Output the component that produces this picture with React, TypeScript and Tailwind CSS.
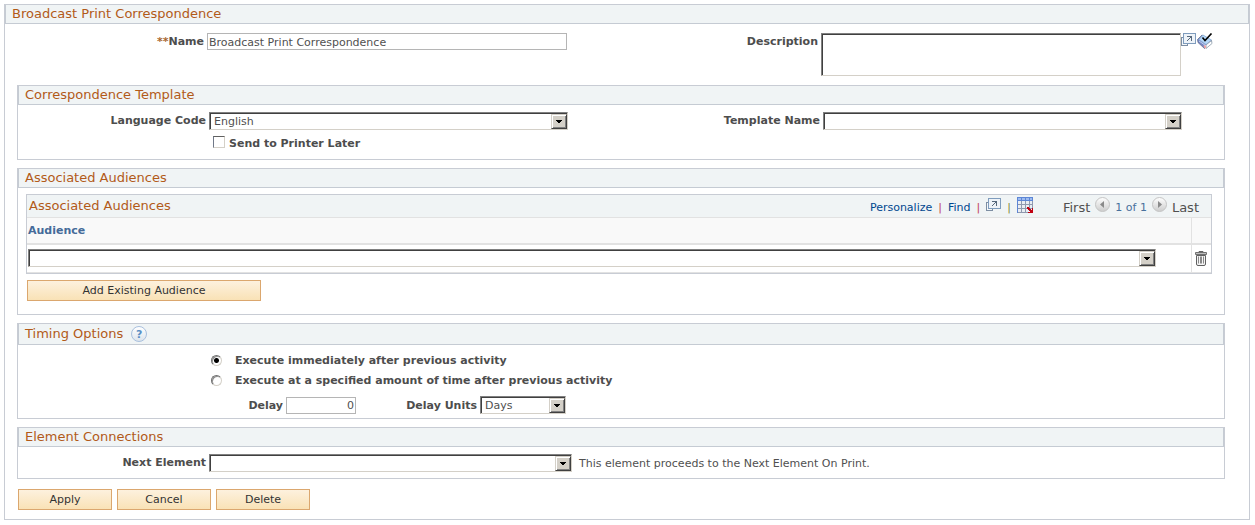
import { useState } from 'react';
import type { ReactNode } from 'react';

interface SectionProps {
  title: string;
  extra?: ReactNode;
  className?: string;
  children: ReactNode;
}

function Section({ title, extra, className = '', children }: SectionProps) {
  return (
    <section className="mb-2 border border-[#c8ccd4]">
      <div className="flex items-center gap-2 border-x border-b border-[#c5cbd3] bg-[#f0f4f5] pl-1.5">
        <h2 className="text-[13px] leading-[18px] text-[#b25a19]">{title}</h2>
        {extra}
      </div>
      <div className={className}>{children}</div>
    </section>
  );
}

interface SelectProps {
  id: string;
  options: string[];
  className: string;
  label?: string;
}

function Select({ id, options, className, label }: SelectProps) {
  return (
    <div className={`relative h-[18px] ${className}`}>
      <select
        id={id}
        aria-label={label}
        className="block h-full w-full appearance-none rounded-none border border-t-[#808080] border-r-[#d4d0c8] border-b-[#d4d0c8] border-l-[#808080] bg-white pt-px pr-5 pl-1 text-[11px] leading-[15px] text-[#505050] shadow-[inset_1px_1px_0_#404040] outline-none"
      >
        {options.map((option) => (
          <option key={option}>{option}</option>
        ))}
      </select>
      {/* Drop-down arrow */}
      <span className="pointer-events-none absolute top-[2px] right-[1px] flex h-[15px] w-[16px] items-center justify-center border border-t-[#d4d0c8] border-r-[#404040] border-b-[#404040] border-l-[#d4d0c8] bg-[#d4d0c8] shadow-[inset_1px_1px_0_#ffffff,inset_-1px_-1px_0_#808080]">
        <svg width="6" height="3" viewBox="0 0 6 3" shapeRendering="crispEdges">
          <path d="M0 0h6v1H0zM1 1h4v1H1zM2 2h2v1H2z" fill="#000" />
        </svg>
      </span>
    </div>
  );
}

function ActionButton({ className, children }: { className: string; children: ReactNode }) {
  return (
    <button
      type="button"
      className={`h-[21px] border border-[#dba76e] bg-linear-to-b from-[#fdf1de] to-[#f9e2b6] text-[11px] leading-[19px] text-[#333333] ${className}`}
    >
      {children}
    </button>
  );
}

function PopupIcon() {
  return (
    <svg width="15" height="13" viewBox="0 0 15 13" shapeRendering="crispEdges">
      <path d="M3.5 4.5h-3v8h6v-2" fill="#f4f7f9" stroke="#7d8ea3" />
      <rect x="2.5" y="0.5" width="12" height="10" fill="#eef3f8" stroke="#7f9cbd" />
      <path d="M6 3h5v1H6zM10 4h1v4h-1zM9 4h1v1H9zM8 5h1v1H8zM7 6h1v1H7zM6 7h1v1H6z" fill="#56687c" />
    </svg>
  );
}

function SpellCheckIcon() {
  return (
    <svg width="16" height="16" viewBox="0 0 16 16">
      <path d="M0.5 6.5 5 2l10 6-5.5 5.5-2 2L1 9.5z" fill="#7486c4" stroke="#68718f" strokeWidth="0.8" />
      <path d="M2 6.5 6 2 14.5 7 9 11.5z" fill="#b4d8f8" stroke="#8fb0d8" strokeWidth="0.8" />
      <path d="M9 12l5.5-4.5.5 3-6 5z" fill="#ffffff" stroke="#8a9aa8" strokeWidth="0.8" />
      <path d="M6.5 12.5 9 12v3.5l-2-1z" fill="#f2a5a5" />
      <path d="M2 8l6.5 4.5" stroke="#d6e6fa" strokeWidth="0.8" />
      <path d="M5.5 4.5 8 7.5l6.5-7" fill="none" stroke="#000" strokeWidth="1.6" />
    </svg>
  );
}

function GridIcon() {
  return (
    <svg width="16" height="16" viewBox="0 0 16 16" shapeRendering="crispEdges">
      <rect width="16" height="16" fill="#8f99ae" />
      <path d="M0 0h16v4H0zM0 0h1v16H0z" fill="#5d86d6" />
      <path d="M1 1h3v2H1zM5 1h3v2H5zM9 1h3v2H9zM13 1h2v2h-2z" fill="#9dbbf0" />
      <path d="M1 4h3v3H1zM5 4h3v3H5zM9 4h3v3H9zM13 4h2v3h-2zM1 8h3v3H1zM5 8h3v3H5zM9 8h3v3H9zM13 8h2v3h-2zM1 12h3v3H1zM5 12h3v3H5zM9 12h3v3H9z" fill="#e9edf3" />
      <path d="M12 12h4v4h-4z" fill="#f0f4f5" />
      <path d="M10 10h2v1h1v1h1v1h1v-2h1v5h-5v-1h2v-1h-1v-1h-1v-1h-1z" fill="#c00010" />
    </svg>
  );
}

function PagerIcon({ direction }: { direction: 'left' | 'right' }) {
  return (
    <svg width="15" height="15" viewBox="0 0 15 15">
      <defs>
        <linearGradient id={`pager-${direction}`} x1="0" y1="0" x2="0" y2="1">
          <stop offset="0" stopColor="#ffffff" />
          <stop offset="1" stopColor="#cccccc" />
        </linearGradient>
      </defs>
      <circle cx="7.5" cy="7.5" r="7" fill={`url(#pager-${direction})`} stroke="#c4c4c4" />
      <path d={direction === 'left' ? 'M9 4v7L5 7.5z' : 'M6 4v7l4-3.5z'} fill="#8a8a8a" />
    </svg>
  );
}

function TrashIcon() {
  return (
    <svg width="12" height="15" viewBox="0 0 12 15">
      <path d="M4 1.5V.5h4v1" fill="none" stroke="#606060" />
      <path d="M.5 1.5h11v2H.5z" fill="#bdbdbd" stroke="#707070" />
      <path d="M1.5 4.5h9v8.5q0 1.5-1.5 1.5H3q-1.5 0-1.5-1.5z" fill="#f4f4f4" stroke="#606060" />
      <path d="M3.5 5.5v7M5.5 5.5v7M6.5 5.5v7M8.5 5.5v7" stroke="#8a8a8a" />
    </svg>
  );
}

function HelpIcon() {
  return (
    <span className="my-[2px] flex size-4 items-center justify-center rounded-full border border-[#a9c0de] bg-linear-to-b from-white to-[#dde4ec] text-[11px] leading-none font-bold text-[#5b8fc4]">
      ?
    </span>
  );
}

const labelClass = 'pt-px text-right text-[11px] leading-[16px] font-bold text-[#4d4d4d]';
const inputClass = 'border border-[#b5b5b5] bg-white px-px pt-px text-[11px] leading-[14px] text-[#505050] outline-none';
const radioClass =
  'size-[11px] shrink-0 appearance-none rounded-full border border-t-[#707070] border-r-[#d4d0c8] border-b-[#d4d0c8] border-l-[#707070] bg-white shadow-[inset_1px_1px_0_#909090] checked:bg-[radial-gradient(circle,#000000_2px,#ffffff_3px)]';
const linkClass = 'pt-1 text-[#00478f]';

const timings = [
  { id: 'immediate', text: 'Execute immediately after previous activity' },
  { id: 'delayed', text: 'Execute at a specified amount of time after previous activity' },
];

export default function App() {
  const [name, setName] = useState('Broadcast Print Correspondence');
  const [timing, setTiming] = useState('immediate');
  const [delay, setDelay] = useState('0');

  return (
    <main className="bg-white pt-1 pr-[5px] pb-1 pl-1 font-['Verdana','DejaVu_Sans',sans-serif]">
      <form className="border border-[#c8ccd4]" onSubmit={(e) => e.preventDefault()}>
        <div className="border-x border-b border-[#c5cbd3] bg-[#f0f4f5] pl-1.5">
          <h1 className="text-[13px] leading-[18px] text-[#b25a19]">Broadcast Print Correspondence</h1>
        </div>

        {/* Name and description */}
        <div className="grid grid-cols-[199px_1fr_192px_428px] items-start gap-x-[3px] pt-[9px] pb-[9px]">
          <label htmlFor="name" className={labelClass}>
            <span className="text-[#a8672f]">**</span>Name
          </label>
          <input
            id="name"
            value={name}
            onChange={(e) => setName(e.target.value)}
            className={`h-[17px] w-[360px] ${inputClass}`}
          />
          <label htmlFor="description" className={labelClass}>
            Description
          </label>
          <div className="flex items-start">
            <textarea
              id="description"
              className="block h-[43px] w-[360px] resize-none border border-t-[#808080] border-r-[#d4d0c8] border-b-[#d4d0c8] border-l-[#808080] bg-white px-1 text-[11px] text-[#505050] shadow-[inset_1px_1px_0_#404040] outline-none"
            />
            <button type="button" aria-label="Open in new window">
              <PopupIcon />
            </button>
            <button type="button" aria-label="Spell check" className="ml-px">
              <SpellCheckIcon />
            </button>
          </div>
        </div>

        <div className="pr-6 pl-3">
          <Section title="Correspondence Template" className="pt-[7px] pb-[7px]">
            <div className="grid grid-cols-[188px_1fr_192px_401px] items-start gap-x-[3px]">
              <label htmlFor="language" className={labelClass}>
                Language Code
              </label>
              <Select id="language" options={['English']} className="w-[359px]" />
              <label htmlFor="template" className={labelClass}>
                Template Name
              </label>
              <Select id="template" options={['']} className="w-[359px]" />
            </div>
            <div className="mt-[5px] flex items-start gap-1 pl-[195px]">
              <input
                id="printer-later"
                type="checkbox"
                className="mt-px size-[12px] appearance-none border border-t-[#606060] border-r-[#d4d0c8] border-b-[#d4d0c8] border-l-[#707888] bg-white checked:bg-[#505050]"
              />
              <label htmlFor="printer-later" className={labelClass}>
                Send to Printer Later
              </label>
            </div>
          </Section>

          <Section title="Associated Audiences" className="pt-[6px] pr-3 pb-[13px] pl-2">
            <div className="border border-[#c8ccd4]">
              <div className="flex items-start bg-[#f0f4f5] pr-3 pl-[2px]">
                <h3 className="flex-1 text-[13px] leading-[22px] text-[#b25a19]">Associated Audiences</h3>
                <div className="flex items-start gap-[6px] text-[11px] leading-[18px]">
                  <a href="#personalize" className={linkClass}>
                    Personalize
                  </a>
                  <span className="pt-1 text-[#c0405a]">|</span>
                  <a href="#find" className={linkClass}>
                    Find
                  </a>
                  <span className="pt-1 text-[#c0405a]">|</span>
                  <a href="#popup" aria-label="Open in new window" className="pt-[3px]">
                    <PopupIcon />
                  </a>
                  <span className="pt-1 text-[#7d8a3a]">|</span>
                  <a href="#download" aria-label="Download to spreadsheet" className="pt-[2px]">
                    <GridIcon />
                  </a>
                </div>
                <div className="ml-[30px] flex items-start gap-[5px] text-[13px] leading-[18px] text-[#505050]">
                  <span className="pt-1">First</span>
                  <button type="button" aria-label="Previous" className="pt-[2px]">
                    <PagerIcon direction="left" />
                  </button>
                  <span className="pt-1 text-[11px] text-[#48709c]">1 of 1</span>
                  <button type="button" aria-label="Next" className="pt-[2px]">
                    <PagerIcon direction="right" />
                  </button>
                  <span className="pt-1">Last</span>
                </div>
              </div>
              <table className="w-full border-collapse">
                <thead>
                  <tr className="h-[26px] border-t border-b-2 border-t-[#e2e2e2] border-b-[#e2e2e2] bg-[#f9f9f9]">
                    <th scope="col" className="pt-[2px] pl-px text-left text-[11px] leading-[16px] font-bold text-[#456b99]">
                      Audience
                    </th>
                    <th scope="col" aria-label="Delete row" className="w-5 border-l border-[#e2e2e2]" />
                  </tr>
                </thead>
                <tbody>
                  <tr className="h-[29px] border-b border-[#e2e2e2]">
                    <td className="pr-[35px] pl-px">
                      <Select id="audience" label="Audience" options={['']} className="w-full" />
                    </td>
                    <td className="border-l border-[#e2e2e2] text-center">
                      <button type="button" aria-label="Delete" className="block px-[3px]">
                        <TrashIcon />
                      </button>
                    </td>
                  </tr>
                </tbody>
              </table>
            </div>
            <ActionButton className="mt-[6px] ml-px block w-[234px]">Add Existing Audience</ActionButton>
          </Section>

          <Section title="Timing Options" extra={<HelpIcon />} className="pt-[7px] pb-[4px]">
            {timings.map((item) => (
              <div key={item.id} className="mb-[3px] flex items-center gap-[13px] pl-[193px]">
                <input
                  id={item.id}
                  type="radio"
                  name="timing"
                  checked={timing === item.id}
                  onChange={() => setTiming(item.id)}
                  className={radioClass}
                />
                <label htmlFor={item.id} className={labelClass}>
                  {item.text}
                </label>
              </div>
            ))}
            <div className="flex items-center pt-1">
              <label htmlFor="delay" className={`w-[265px] ${labelClass}`}>
                Delay
              </label>
              <input
                id="delay"
                value={delay}
                onChange={(e) => setDelay(e.target.value)}
                className={`ml-[3px] h-[17px] w-[70px] text-right ${inputClass}`}
              />
              <label htmlFor="delay-units" className={`mr-[3px] w-[121px] ${labelClass}`}>
                Delay Units
              </label>
              <Select id="delay-units" options={['Days', 'Hours']} className="w-[86px]" />
            </div>
          </Section>

          <Section title="Element Connections" className="flex items-start pt-[7px] pb-[6px]">
            <label htmlFor="next-element" className={`mr-[3px] w-[188px] ${labelClass}`}>
              Next Element
            </label>
            <Select id="next-element" options={['']} className="w-[363px]" />
            <p className="pt-px pl-[7px] text-[11px] leading-[17px] text-[#505050]">
              This element proceeds to the Next Element On Print.
            </p>
          </Section>

          <div className="flex gap-[5px] pt-[2px] pb-[9px] pl-px">
            <ActionButton className="w-[94px]">Apply</ActionButton>
            <ActionButton className="w-[94px]">Cancel</ActionButton>
            <ActionButton className="w-[94px]">Delete</ActionButton>
          </div>
        </div>
      </form>
    </main>
  );
}
